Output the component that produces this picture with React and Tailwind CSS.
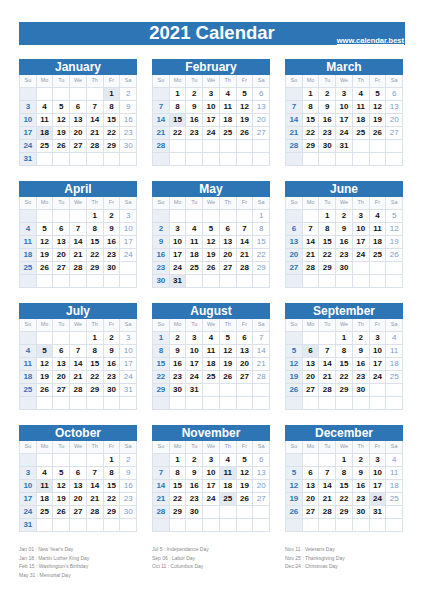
const MONTHS = [
  ['January', 5, 31],
  ['February', 1, 28],
  ['March', 1, 31],
  ['April', 4, 30],
  ['May', 6, 31],
  ['June', 2, 30],
  ['July', 4, 31],
  ['August', 0, 31],
  ['September', 3, 30],
  ['October', 5, 31],
  ['November', 1, 30],
  ['December', 3, 31],
]

const HOLIDAYS = {
  0: [1, 18],
  1: [15],
  4: [31],
  6: [5],
  8: [6],
  9: [11],
  10: [11, 25],
  11: [24],
}

const DAYS = ['Su', 'Mo', 'Tu', 'We', 'Th', 'Fr', 'Sa']

const NOTES = [
  ["Jan 01 : New Year's Day", 'Jan 18 : Martin Luther King Day', "Feb 15 : Washington's Birthday", 'May 31 : Memorial Day'],
  ['Jul 5 : Independance Day', 'Sep 06 : Labor Day', 'Oct 11 : Columbus Day'],
  ['Nov 11 : Veterans Day', 'Nov 25 : Thanksgiving Day', 'Dec 24 : Christmas Day'],
]

function Month({ index, name, start, length }) {
  const holidays = HOLIDAYS[index] || []
  const cells = []
  for (let i = 0; i < 42; i++) {
    const day = i - start + 1
    const valid = day >= 1 && day <= length
    const col = i % 7
    let bg = 'bg-white'
    if (valid && holidays.includes(day)) bg = 'bg-[#e3e9f1]'
    else if (col === 0) bg = 'bg-[#eaeff6]'
    let color = 'text-[#111] font-bold'
    if (col === 0) color = 'text-[#2e75b6] font-bold'
    if (col === 6) color = 'text-[#7c9dcb] font-normal'
    cells.push(
      <div key={i} className={`${bg} ${color} flex items-center justify-center text-[8px] leading-none`}>
        {valid ? day : ''}
      </div>
    )
  }

  return (
    <div className="flex flex-col">
      <div className="h-[16px] bg-[#2e75b6] flex items-center justify-center text-white font-bold text-[12px] leading-none">
        {name}
      </div>
      <div className="grid grid-cols-7 grid-rows-[repeat(7,12px)] gap-px bg-[#dbe2eb] border border-[#dbe2eb] border-t-0">
        {DAYS.map((d) => (
          <div key={d} className="bg-[#f8fafc] flex items-center justify-center text-[5.5px] text-[#8f9db1] leading-none">
            {d}
          </div>
        ))}
        {cells}
      </div>
    </div>
  )
}

export default function App() {
  return (
    <div className="w-[424px] h-[600px] bg-white px-[19px] pt-[22px]" style={{ fontFamily: '"Liberation Sans", Arial, sans-serif' }}>
      <div className="relative h-[23px] bg-[#2e75b6] flex items-center justify-center">
        <span className="text-white font-bold text-[18.5px] leading-none">2021 Calendar</span>
        <span className="absolute right-[1px] bottom-[1px] text-white font-bold text-[7.5px] leading-none underline">
          www.calendar.best
        </span>
      </div>

      <div className="mt-[14px] grid grid-cols-[118px_118px_118px] gap-x-[15px] gap-y-[15px]">
        {MONTHS.map(([name, start, length], i) => (
          <Month key={name} index={i} name={name} start={start} length={length} />
        ))}
      </div>

      <div className="mt-[13px] grid grid-cols-[118px_118px_118px] gap-x-[15px] text-[5px] leading-[8.7px] text-[#8a8a8a]">
        {NOTES.map((col, i) => (
          <div key={i} className="flex flex-col">
            {col.map((t) => (
              <div key={t} className="whitespace-nowrap">{t}</div>
            ))}
          </div>
        ))}
      </div>
    </div>
  )
}
